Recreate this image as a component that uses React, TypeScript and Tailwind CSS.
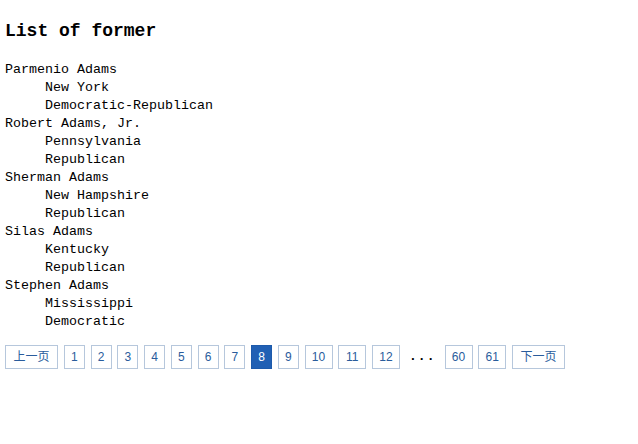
const members = [
  { name: 'Parmenio Adams', state: 'New York', party: 'Democratic-Republican' },
  { name: 'Robert Adams, Jr.', state: 'Pennsylvania', party: 'Republican' },
  { name: 'Sherman Adams', state: 'New Hampshire', party: 'Republican' },
  { name: 'Silas Adams', state: 'Kentucky', party: 'Republican' },
  { name: 'Stephen Adams', state: 'Mississippi', party: 'Democratic' },
]

const pages = ['1', '2', '3', '4', '5', '6', '7', '8', '9', '10', '11', '12']

const widthFor = (label: string) =>
  label.length === 3 ? 'w-[53px]' : label.length === 2 ? 'w-[28px]' : 'w-[21px]'

const PageLink = ({ label, active = false }: { label: string; active?: boolean }) => (
  <a
    href="#"
    className={
      'flex h-6 shrink-0 items-center justify-center border text-[12px] leading-none ' +
      widthFor(label) +
      ' ' +
      (active
        ? 'border-[#1d5aab] bg-[#2160b4] text-white'
        : 'border-[#b6c7dc] bg-white text-[#2a5c9c]')
    }
    style={{ fontFamily: '"Liberation Sans", "Noto Sans CJK SC", sans-serif' }}
  >
    {label}
  </a>
)

export default function App() {
  return (
    <div className="min-h-[444px] bg-white px-[5px] pt-[20px] text-black" style={{ fontFamily: '"Liberation Mono", "Noto Sans CJK SC", monospace' }}>
      <h3 className="h-[22px] text-[18px] font-bold leading-[22px]">List of former</h3>

      {/* list */}
      <dl className="mt-[19px] text-[13.33px] leading-[18px]">
        {members.map((m) => (
          <div key={m.name}>
            <dt>{m.name}</dt>
            <dd className="ml-10">{m.state}</dd>
            <dd className="ml-10">{m.party}</dd>
          </div>
        ))}
      </dl>

      {/* pager */}
      <div className="mt-[14px] flex items-center gap-[5.75px]">
        <PageLink label="上一页" />
        {pages.map((p) => (
          <PageLink key={p} label={p} active={p === '8'} />
        ))}
        <span className="flex h-6 w-[33px] items-center justify-center text-[13px] font-bold tracking-[1px]">...</span>
        <PageLink label="60" />
        <PageLink label="61" />
        <PageLink label="下一页" />
      </div>
    </div>
  )
}
